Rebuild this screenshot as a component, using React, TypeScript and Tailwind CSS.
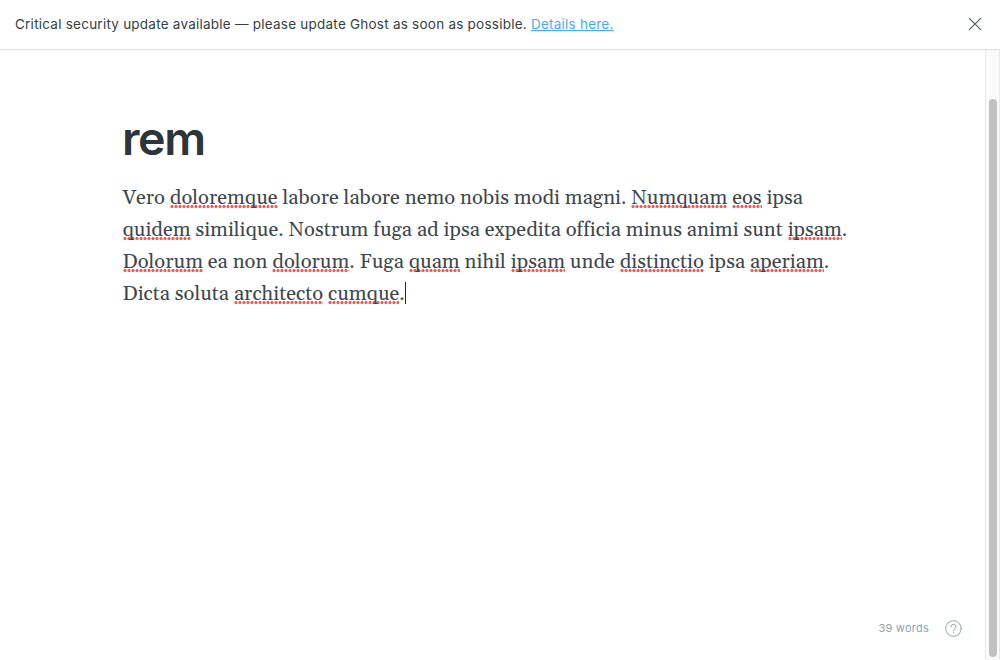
import React from "react";

function Misspelt({ children }: { children: string }) {
  return (
    <span className="bg-[radial-gradient(circle_at_2px_1.5px,#ff5b52_1.3px,transparent_1.9px)] bg-[length:4px_3px] bg-[position:0_calc(100%_-_3px)] bg-repeat-x">
      {children}
    </span>
  );
}

function Banner() {
  return (
    <header className="flex h-[50px] shrink-0 items-center justify-between border-b border-[#dfe1e3] pr-[18px] pb-[2px] pl-[15px]">
      <p className="text-[13.5px] leading-5 tracking-[0.235px] whitespace-nowrap text-[#343f44]">
        Critical security update available — please update Ghost as soon as possible.{" "}
        <a className="text-[#3eb0ef] underline">Details here.</a>
      </p>
      <svg className="size-[14px]" viewBox="0 0 14 14" fill="none" stroke="#4d565b" strokeWidth="1.1" strokeLinecap="round">
        <path d="M1.3 1.3 12.7 12.7M12.7 1.3 1.3 12.7" />
      </svg>
    </header>
  );
}

export default function App() {
  return (
    <div className="flex h-[660px] w-[1000px] flex-col overflow-hidden bg-white font-['Inter',sans-serif]">
      <Banner />
      <div className="flex min-h-0 flex-1">
        <main className="flex flex-1 flex-col justify-between">
          <article className="pt-[61px] pl-[122px]">
            <h1 className="text-[46.5px] leading-[54px] font-semibold tracking-[-1.4px] text-[#2b353a]">rem</h1>
            <div className="mt-[17px] pl-[0.5px] font-['Gelasio','Georgia','Liberation_Serif',serif] text-[20.23px] leading-8 whitespace-nowrap text-[#3d484d] [font-variant-ligatures:none]">
              <p>
                Vero <Misspelt>doloremque</Misspelt> labore labore nemo nobis modi magni. <Misspelt>Numquam</Misspelt> <Misspelt>eos</Misspelt> ipsa
              </p>
              <p>
                <Misspelt>quidem</Misspelt> similique. Nostrum fuga ad ipsa expedita officia minus animi sunt <Misspelt>ipsam</Misspelt>.
              </p>
              <p>
                <Misspelt>Dolorum</Misspelt> ea non <Misspelt>dolorum</Misspelt>. Fuga <Misspelt>quam</Misspelt> nihil <Misspelt>ipsam</Misspelt> unde <Misspelt>distinctio</Misspelt> ipsa <Misspelt>aperiam</Misspelt>.
              </p>
              <p className="flex items-center">
                <span>
                  Dicta soluta <Misspelt>architecto</Misspelt> <Misspelt>cumque</Misspelt>.
                </span>
                <span className="-mt-[2px] h-[22px] w-px bg-[#20282c]" />
              </p>
            </div>
          </article>
          <footer className="flex items-center justify-end gap-[15.5px] pr-[23.5px] pb-[23.5px]">
            <span className="text-[11px] leading-4 tracking-[0.25px] text-[#8fa1ab]">39 words</span>
            <svg className="size-[17px]" viewBox="0 0 17 17" fill="none" stroke="#8fa1ab" strokeLinecap="round">
              <circle cx="8.5" cy="8.5" r="7.8" />
              <path d="M6 6.8a2.5 2.5 0 1 1 3.7 2.1c-.8.4-1.2.8-1.2 1.5" />
              <path d="M8.5 12.6v.1" strokeWidth="1.2" />
            </svg>
          </footer>
        </main>
        <aside className="flex w-[15px] flex-col items-center border-x border-[#e8e8e8] bg-[#fafafa] pt-[49px] pb-[3px]">
          <div className="w-2 flex-1 rounded-full bg-[#c1c1c1]" />
        </aside>
      </div>
    </div>
  );
}
